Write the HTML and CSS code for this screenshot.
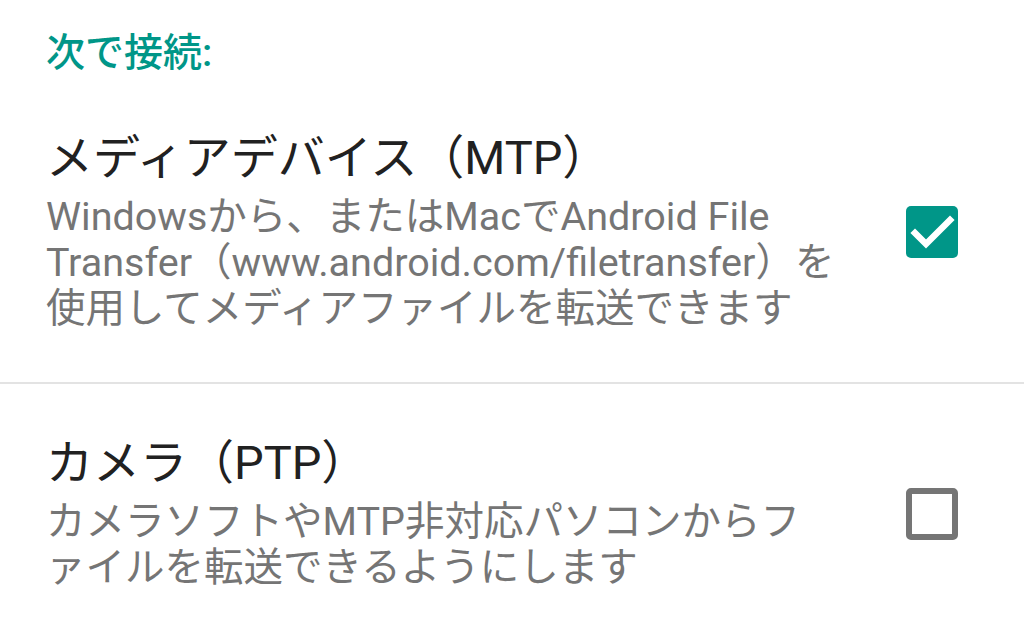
FILE: index.html
```html
<!DOCTYPE html>
<html lang="ja">
<head>
    <meta charset="UTF-8">
    <meta name="viewport" content="width=device-width, initial-scale=1.0">
    <title>USB接続</title>
    <link rel="stylesheet" href="styles.css">
</head>
<body>

    <div class="screen">
        <!-- Category header -->
        <div class="category">次で接続:</div>

        <!-- MTP -->
        <div class="pref">
            <div class="pref-text">
                <div class="pref-title">メディアデバイス（MTP）</div>
                <div class="pref-summary">Windowsから、またはMacでAndroid File Transfer（www.android.com/filetransfer）を使用してメディアファイルを転送できます</div>
            </div>
            <div class="pref-widget">
                <span class="checkbox checked">
                    <svg viewBox="0 0 52 52" width="52" height="52">
                        <path d="M9 27 L20 38 L44 14" fill="none" stroke="#fff" stroke-width="6.5" stroke-linecap="square"/>
                    </svg>
                </span>
            </div>
        </div>

        <div class="divider"></div>

        <!-- PTP -->
        <div class="pref">
            <div class="pref-text">
                <div class="pref-title">カメラ（PTP）</div>
                <div class="pref-summary">カメラソフトやMTP非対応パソコンからファイルを転送できるようにします</div>
            </div>
            <div class="pref-widget">
                <span class="checkbox"></span>
            </div>
        </div>
    </div>

</body>
</html>
```

FILE: styles.css
```css
/* Global Styles */
* {
    margin: 0;
    padding: 0;
    box-sizing: border-box;
}

body {
    font-family: Roboto, "Noto Sans CJK JP", sans-serif;
    background: #ffffff;
    width: 1024px;
    height: 626px;
    overflow: hidden;
}

.category {
    padding: 30px 46px 0;
    font-size: 39px;
    line-height: 46px;
    font-weight: 500;
    color: #009688;
}

.pref {
    display: flex;
    align-items: center;
    padding: 52px 66px 50px 46px;
}

.category + .pref {
    padding-top: 55px;
}

.pref-text {
    width: 790px;
}

.pref-title {
    font-size: 47px;
    line-height: 53px;
    color: #212121;
    margin-bottom: 10px;
}

.pref-summary {
    font-size: 39.5px;
    line-height: 46px;
    color: #757575;
}

.pref-widget {
    margin-left: auto;
    width: 52px;
    height: 52px;
}

.checkbox {
    display: block;
    width: 52px;
    height: 52px;
    border: 6px solid #757575;
    border-radius: 5px;
}

.checkbox.checked {
    border: none;
    background-color: #009688;
}

.checkbox svg {
    display: block;
}

.divider {
    height: 2px;
    background-color: #e3e3e3;
}
```
